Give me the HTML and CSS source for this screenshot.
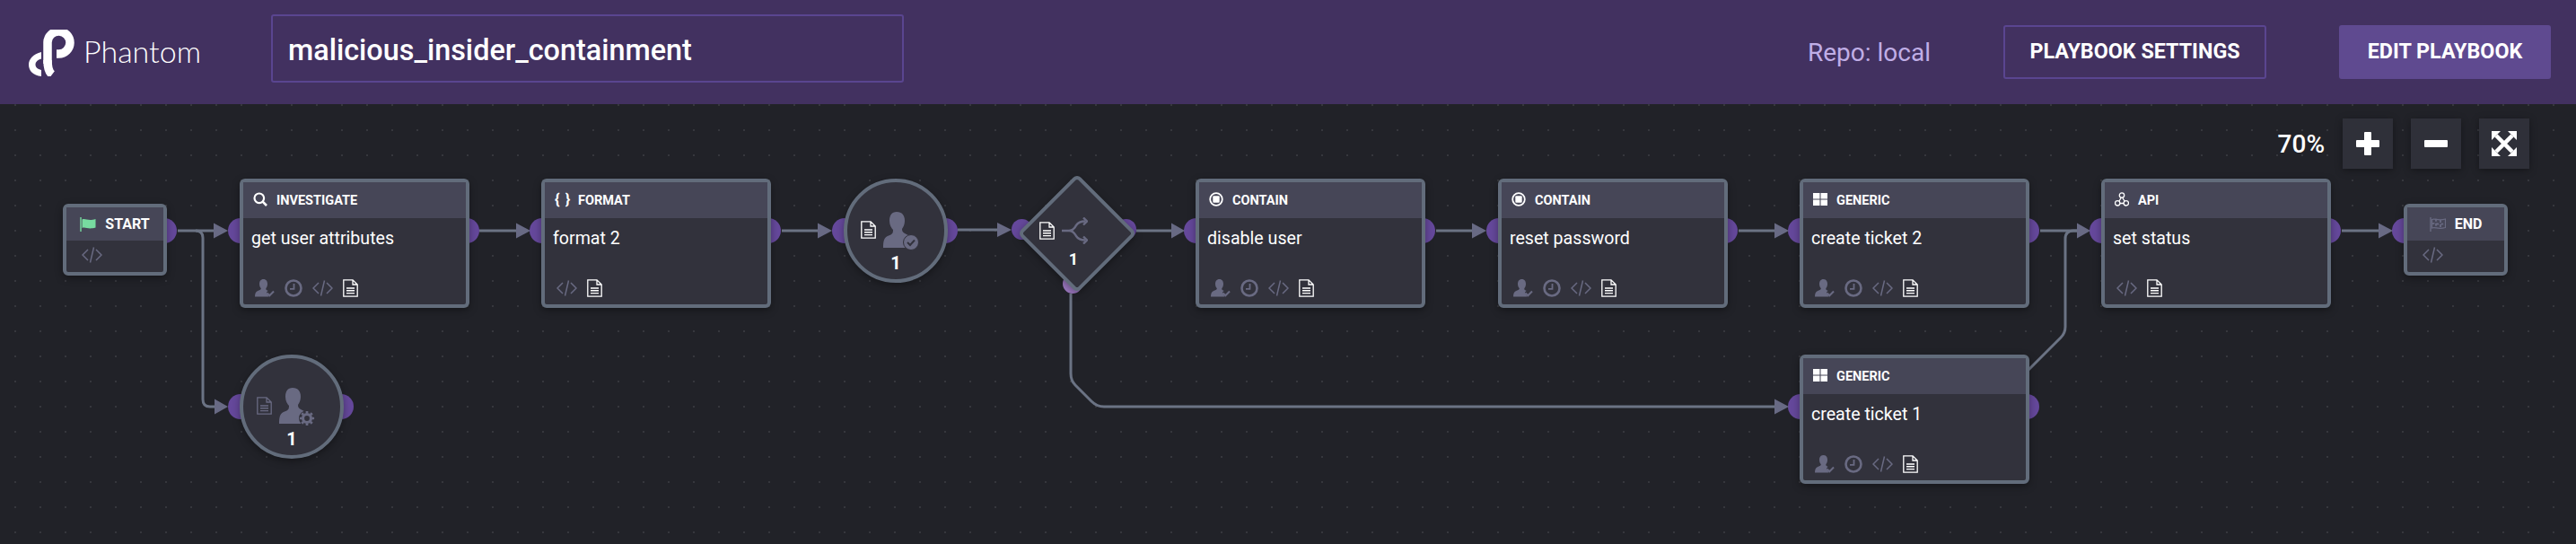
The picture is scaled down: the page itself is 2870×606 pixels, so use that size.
FILE: index.html
```html
<!DOCTYPE html>
<html lang="en">
<head>
    <meta charset="UTF-8">
    <title>Phantom - malicious_insider_containment</title>
    <link rel="stylesheet" href="styles.css">
</head>
<body>

    <!-- Icon sprites -->
    <svg class="sprites" width="0" height="0">
        <symbol id="i-doc" viewBox="0 0 17 20">
            <path d="M.8.8H11L16.2 6V19.2H.8Z M11 .8V6H16.2" fill="none" stroke="currentColor" stroke-width="1.3"/>
            <path d="M4 10H13M4 12.8H13M4 15.6H13" stroke="currentColor" stroke-width="1.4"/>
        </symbol>
        <symbol id="i-person" viewBox="0 0 22 20">
            <path d="M9.5 0C12.6 0 14 2.3 14 5.2C14 7.4 13.2 9 12.3 10.2C12.2 11.4 12.6 12 14 12.6L14.6 12.9L13 14.6L15.5 19.5H0C0 16 .7 14.2 3.2 13C6 11.9 6.8 11.5 6.8 10.2C5.8 9 5 7.4 5 5.2C5 2.3 6.5 0 9.5 0Z" fill="currentColor"/>
            <path d="M13.5 15.5L16.3 18.3L21 13.5" fill="none" stroke="currentColor" stroke-width="2"/>
        </symbol>
        <symbol id="i-clock" viewBox="0 0 20 20">
            <circle cx="10" cy="10" r="8.5" fill="none" stroke="currentColor" stroke-width="2.6"/>
            <path d="M10.5 5V10.8H6" fill="none" stroke="currentColor" stroke-width="1.8"/>
        </symbol>
        <symbol id="i-code" viewBox="0 0 23 18">
            <path d="M7 3L1 9L7 15M16 3L22 9L16 15M13.5 .5L9.5 17.5" fill="none" stroke="currentColor" stroke-width="1.5"/>
        </symbol>
        <symbol id="i-search" viewBox="0 0 16 16">
            <circle cx="6.8" cy="6.8" r="5.3" fill="none" stroke="currentColor" stroke-width="2.2"/>
            <path d="M10.7 10.7L15 15" stroke="currentColor" stroke-width="2.6"/>
        </symbol>
        <symbol id="i-contain" viewBox="0 0 16 16">
            <circle cx="8" cy="8" r="6.8" fill="none" stroke="currentColor" stroke-width="1.8"/>
            <rect x="4.3" y="4.3" width="7.4" height="7.4" rx="1" fill="currentColor"/>
        </symbol>
        <symbol id="i-generic" viewBox="0 0 15 13">
            <path d="M0 0H7V6H0ZM8 0H15V6H8ZM0 7H7V13H0ZM8 7H15V13H8Z" fill="currentColor"/>
        </symbol>
        <symbol id="i-api" viewBox="0 0 16 16">
            <path d="M8 5L3.5 12.5H12.5Z" fill="none" stroke="currentColor" stroke-width="1.3"/>
            <circle cx="8" cy="3.5" r="2.7" fill="#464657" stroke="currentColor" stroke-width="1.3"/>
            <circle cx="3.2" cy="12.3" r="2.7" fill="#464657" stroke="currentColor" stroke-width="1.3"/>
            <circle cx="12.8" cy="12.3" r="2.7" fill="#464657" stroke="currentColor" stroke-width="1.3"/>
        </symbol>
        <symbol id="i-flag" viewBox="0 0 18 16">
            <path d="M1 0V16" stroke="currentColor" stroke-width="1.4"/>
            <path d="M2.5 2.5C6 .8 9 4.6 17.5 2V11.5C9 14 6 10.3 2.5 12Z" fill="currentColor"/>
        </symbol>
        <symbol id="i-endflag" viewBox="0 0 18 16">
            <path d="M1 0V16" stroke="currentColor" stroke-width="1.4"/>
            <path d="M2.5 2.5C6 .8 9 4.6 17.5 2V11.5C9 14 6 10.3 2.5 12Z" fill="none" stroke="currentColor" stroke-width="1.2"/>
            <path d="M2.5 7.3C6 5.6 9 9.4 17.5 6.8M7 1.8V12M12 3V12.7" fill="none" stroke="currentColor" stroke-width="1.8" stroke-dasharray="3 2"/>
        </symbol>
        <symbol id="i-branch" viewBox="0 0 29 30">
            <path d="M0 15H8C13 15 14 12 16 9C18 6 20 4.5 26 4.5M8 15C13 15 14 18 16 21C18 24 20 25.5 26 25.5" fill="none" stroke="currentColor" stroke-width="2.4"/>
            <path d="M24 .5L28 4.5L24 8.5M24 21.5L28 25.5L24 29.5" fill="none" stroke="currentColor" stroke-width="2.4"/>
        </symbol>
        <symbol id="i-user" viewBox="0 0 38 40">
            <path d="M15 0C21 0 24 4 24 10C24 14 22.5 17 21 19C21 22 22 23 25 24.5L30 27V40H0C0 32 1 28.5 6 26.5C10 25 11 24 11 20C9 18 7 14.5 7 10C7 4 9.5 0 15 0Z" fill="currentColor"/>
        </symbol>
        <symbol id="i-fit" viewBox="0 0 28 28">
            <path d="M5 5L23 23M23 5L5 23" stroke="currentColor" stroke-width="4.5"/>
            <path d="M0 0H10L0 10ZM28 0H18L28 10ZM0 28H10L0 18ZM28 28H18L28 18Z" fill="currentColor"/>
        </symbol>
    </svg>

    <!-- Top bar -->
    <header class="topbar">
        <div class="brand">
            <svg class="brand-mark" viewBox="0 0 52 52" width="52" height="52">
                <path d="M21 38V14A12.5 12.5 0 1 1 33.5 27H31" fill="none" stroke="#fff" stroke-width="9.5"/>
                <path d="M21 34C21 42 22 47 26 50" fill="none" stroke="#fff" stroke-width="9.5"/>
                <path d="M14 25C5 27 0 33 0 39C0 46 5 51 14 52V45C10 44 7.5 42 7.5 39C7.5 36 10 33.5 14 32.5Z" fill="#fff"/>
            </svg>
            <span class="brand-name">Phantom</span>
        </div>
        <div class="title-box">malicious_insider_containment</div>
        <span class="repo">Repo: local</span>
        <button class="btn btn-outline">PLAYBOOK SETTINGS</button>
        <button class="btn btn-solid">EDIT PLAYBOOK</button>
    </header>

    <!-- Playbook canvas -->
    <main class="canvas">
        <div class="zoom-bar">
            <span class="zoom-level">70%</span>
            <button class="zoom-btn"><span class="plus"></span></button>
            <button class="zoom-btn"><span class="minus"></span></button>
            <button class="zoom-btn"><svg class="fit"><use href="#i-fit"/></svg></button>
        </div>

        <svg class="links" viewBox="0 0 2870 490">
            <g class="link-lines">
                <path d="M198 141H240"/>
                <path d="M218 141Q226 141 226 149V329Q226 337 234 337H240"/>
                <path d="M534 141H576"/>
                <path d="M871 141H912"/>
                <path d="M1067 140H1112"/>
                <path d="M1266 141H1306"/>
                <path d="M1600 141H1642"/>
                <path d="M1937 141H1979"/>
                <path d="M2273 141H2315"/>
                <path d="M2609 141H2652"/>
                <path d="M1193 211V300Q1193 308 1198 313L1216 331Q1222 337 1230 337H1978"/>
                <path d="M2255 301L2296 260Q2301 255 2301 248V150Q2301 141 2310 141H2315"/>
            </g>
            <g class="link-heads">
                <path d="M238 132.5L254 141L238 149.5Z"/>
                <path d="M239 328.5L254 337L239 345.5Z"/>
                <path d="M575 132.5L591 141L575 149.5Z"/>
                <path d="M911 132.5L927 141L911 149.5Z"/>
                <path d="M1111 132L1127 140L1111 148Z"/>
                <path d="M1305 132.5L1320 141L1305 149.5Z"/>
                <path d="M1640 132.5L1656 141L1640 149.5Z"/>
                <path d="M1977 132.5L1993 141L1977 149.5Z"/>
                <path d="M2314 132.5L2329 141L2314 149.5Z"/>
                <path d="M2650 132.5L2666 141L2650 149.5Z"/>
                <path d="M1977 328.5L1993 337L1977 345.5Z"/>
            </g>
        </svg>

        <!-- Start / end -->
        <div class="node small no-in n-start">
            <div class="node-head"><svg class="flag start-flag"><use href="#i-flag"/></svg>START</div>
            <div class="node-foot"><svg class="ico code"><use href="#i-code"/></svg></div>
        </div>
        <div class="node small no-out n-end">
            <div class="node-head"><svg class="flag end-flag"><use href="#i-endflag"/></svg>END</div>
            <div class="node-foot"><svg class="ico code"><use href="#i-code"/></svg></div>
        </div>

        <!-- Action blocks -->
        <div class="node n-investigate">
            <div class="node-head"><svg class="head-ico"><use href="#i-search"/></svg>INVESTIGATE</div>
            <div class="node-name">get user attributes</div>
            <div class="node-foot">
                <svg class="ico person"><use href="#i-person"/></svg>
                <svg class="ico clock"><use href="#i-clock"/></svg>
                <svg class="ico code"><use href="#i-code"/></svg>
                <svg class="ico doc"><use href="#i-doc"/></svg>
            </div>
        </div>

        <div class="node n-format">
            <div class="node-head"><span class="braces">{ }</span>FORMAT</div>
            <div class="node-name">format 2</div>
            <div class="node-foot">
                <svg class="ico code"><use href="#i-code"/></svg>
                <svg class="ico doc"><use href="#i-doc"/></svg>
            </div>
        </div>

        <div class="node n-contain1">
            <div class="node-head"><svg class="head-ico"><use href="#i-contain"/></svg>CONTAIN</div>
            <div class="node-name">disable user</div>
            <div class="node-foot">
                <svg class="ico person"><use href="#i-person"/></svg>
                <svg class="ico clock"><use href="#i-clock"/></svg>
                <svg class="ico code"><use href="#i-code"/></svg>
                <svg class="ico doc"><use href="#i-doc"/></svg>
            </div>
        </div>

        <div class="node n-contain2">
            <div class="node-head"><svg class="head-ico"><use href="#i-contain"/></svg>CONTAIN</div>
            <div class="node-name">reset password</div>
            <div class="node-foot">
                <svg class="ico person"><use href="#i-person"/></svg>
                <svg class="ico clock"><use href="#i-clock"/></svg>
                <svg class="ico code"><use href="#i-code"/></svg>
                <svg class="ico doc"><use href="#i-doc"/></svg>
            </div>
        </div>

        <div class="node n-generic2">
            <div class="node-head"><svg class="head-ico"><use href="#i-generic"/></svg>GENERIC</div>
            <div class="node-name">create ticket 2</div>
            <div class="node-foot">
                <svg class="ico person"><use href="#i-person"/></svg>
                <svg class="ico clock"><use href="#i-clock"/></svg>
                <svg class="ico code"><use href="#i-code"/></svg>
                <svg class="ico doc"><use href="#i-doc"/></svg>
            </div>
        </div>

        <div class="node n-generic1">
            <div class="node-head"><svg class="head-ico"><use href="#i-generic"/></svg>GENERIC</div>
            <div class="node-name">create ticket 1</div>
            <div class="node-foot">
                <svg class="ico person"><use href="#i-person"/></svg>
                <svg class="ico clock"><use href="#i-clock"/></svg>
                <svg class="ico code"><use href="#i-code"/></svg>
                <svg class="ico doc"><use href="#i-doc"/></svg>
            </div>
        </div>

        <div class="node n-api">
            <div class="node-head"><svg class="head-ico"><use href="#i-api"/></svg>API</div>
            <div class="node-name">set status</div>
            <div class="node-foot">
                <svg class="ico code"><use href="#i-code"/></svg>
                <svg class="ico doc"><use href="#i-doc"/></svg>
            </div>
        </div>

        <!-- Prompts -->
        <div class="round n-prompt1">
            <div class="round-icons">
                <svg class="ico doc"><use href="#i-doc"/></svg>
                <span class="user">
                    <svg class="user-body"><use href="#i-user"/></svg>
                    <svg class="badge" viewBox="0 0 18 18">
                        <circle cx="9" cy="9" r="8.5" fill="#696a82" stroke="#32323c" stroke-width="1"/>
                        <path d="M5 9L8 12L13 6.5" fill="none" stroke="#32323c" stroke-width="2"/>
                    </svg>
                </span>
            </div>
            <span class="count">1</span>
        </div>

        <div class="round n-prompt2">
            <div class="round-icons">
                <svg class="ico doc dim"><use href="#i-doc"/></svg>
                <span class="user">
                    <svg class="user-body"><use href="#i-user"/></svg>
                    <svg class="badge" viewBox="-1 -1 20 20">
                        <circle cx="9" cy="9" r="10" fill="#32323c"/>
                        <circle cx="9" cy="9" r="5" fill="none" stroke="#696a82" stroke-width="3.6"/>
                        <path d="M9 0V3M9 15V18M0 9H3M15 9H18M2.6 2.6L4.8 4.8M13.2 13.2L15.4 15.4M2.6 15.4L4.8 13.2M13.2 4.8L15.4 2.6" stroke="#696a82" stroke-width="3"/>
                    </svg>
                </span>
            </div>
            <span class="count">1</span>
        </div>

        <!-- Decision -->
        <div class="decision n-decision">
            <span class="port-left"></span>
            <span class="port-right"></span>
            <div class="round-icons">
                <svg class="ico doc"><use href="#i-doc"/></svg>
                <svg class="branch"><use href="#i-branch"/></svg>
            </div>
            <span class="count">1</span>
        </div>
    </main>

</body>
</html>
```

FILE: styles.css
```css
/* General Styles */
* {
    box-sizing: border-box;
}

body {
    margin: 0;
    width: 2870px;
    height: 606px;
    overflow: hidden;
    background: #212228;
    color: #fff;
    font-family: Roboto, "Liberation Sans", sans-serif;
}

.sprites {
    position: absolute;
}

/* Top Bar */
.topbar {
    display: flex;
    align-items: center;
    height: 116px;
    padding: 0 28px 0 32px;
    background: #423160;
}

.brand {
    display: flex;
    align-items: center;
    gap: 9px;
    width: 270px;
}

.brand-mark {
    flex: none;
    margin-top: 2px;
}

.brand-name {
    font-family: Lato, sans-serif;
    font-weight: 300;
    font-size: 34px;
    margin-top: -4px;
}

.title-box {
    display: flex;
    align-items: center;
    width: 705px;
    height: 76px;
    margin-top: -8px;
    padding: 3px 0 0 17px;
    border: 2px solid #5a4590;
    border-radius: 3px;
    font-size: 32.4px;
    font-weight: 500;
}

.repo {
    margin-left: auto;
    margin-right: 81px;
    font-size: 28px;
    color: #c0aee6;
}

.btn {
    height: 60px;
    border-radius: 3px;
    color: #fff;
    font-family: inherit;
    font-size: 23.3px;
    font-weight: 700;
    padding: 0 0 2px;
}

.btn-outline {
    width: 293px;
    margin-right: 81px;
    background: transparent;
    border: 2px solid #5a4590;
}

.btn-solid {
    width: 236px;
    background: #5f4a90;
    border: none;
}

/* Canvas */
.canvas {
    position: relative;
    z-index: 0;
    height: 490px;
    background-image: radial-gradient(circle, #36373d 1px, transparent 1.5px);
    background-size: 28px 28px;
    background-position: 3px -13px;
}

.links {
    position: absolute;
    left: 0;
    top: 0;
    width: 2870px;
    height: 490px;
}

.link-lines path {
    fill: none;
    stroke: #6b7384;
    stroke-width: 3;
}

.link-heads path {
    fill: #686a84;
}

/* Zoom Controls */
.zoom-bar {
    position: absolute;
    top: 16px;
    right: 52px;
    display: flex;
    align-items: center;
    gap: 20px;
    z-index: 2;
}

.zoom-level {
    font-size: 28px;
    font-weight: 500;
}

.zoom-btn {
    display: flex;
    align-items: center;
    justify-content: center;
    width: 56px;
    height: 56px;
    padding: 0;
    border: none;
    background: #2f3039;
    color: #fff;
    box-shadow: 0 2px 8px rgba(0, 0, 0, 0.35);
}

.plus,
.minus {
    position: relative;
    display: block;
    width: 26px;
    height: 8px;
    border-radius: 1px;
    background: #fff;
}

.plus::after {
    content: "";
    position: absolute;
    left: 9px;
    top: -9px;
    width: 8px;
    height: 26px;
    border-radius: 1px;
    background: #fff;
}

.fit {
    width: 28px;
    height: 28px;
}

/* Nodes */
.node {
    position: absolute;
    display: flex;
    flex-direction: column;
    width: 256px;
    height: 144px;
    background: #32323c;
    border: 4px solid #626c7b;
    border-radius: 6px;
    box-shadow: 0 3px 8px rgba(0, 0, 0, 0.35);
}

.node::before,
.node::after,
.round::before,
.round::after {
    content: "";
    position: absolute;
    top: 50%;
    width: 28px;
    height: 28px;
    margin-top: -14px;
    border-radius: 50%;
    background: #65489b;
    z-index: -1;
}

.node::before,
.node::after {
    top: 54px;
    margin-top: -14px;
}

.node::before,
.round::before {
    left: -17px;
}

.node::after,
.round::after {
    right: -15px;
}

.no-in::before,
.no-out::after {
    display: none;
}

.node-head {
    display: flex;
    align-items: center;
    flex: none;
    height: 40px;
    padding-left: 11px;
    background: #464657;
    font-size: 14.5px;
    font-weight: 700;
}

.head-ico {
    flex: none;
    width: 16px;
    height: 16px;
    margin-right: 10px;
    margin-top: -2px;
}

.braces {
    width: 26px;
    font-size: 17px;
    letter-spacing: 1px;
    margin-top: -2px;
}

.node-name {
    padding: 11px 9px 0;
    font-size: 19.6px;
}

.node-foot {
    display: flex;
    align-items: center;
    gap: 11px;
    margin-top: auto;
    padding: 0 0 8px 13px;
}

.ico {
    flex: none;
    color: #696a82;
}

.person {
    width: 22px;
    height: 20px;
}

.clock {
    width: 20px;
    height: 20px;
}

.code {
    width: 23px;
    height: 18px;
}

.doc {
    width: 17px;
    height: 20px;
    color: #fff;
}

.doc.dim {
    color: #696a82;
}

/* Small start / end nodes */
.small {
    width: 116px;
    height: 80px;
}

.small::before,
.small::after {
    top: 26px;
}

.small .node-head {
    justify-content: center;
    height: 37px;
    padding-left: 0;
    gap: 10px;
    font-size: 16px;
}

.small .node-foot {
    padding: 0 0 10px 17px;
}

.flag {
    width: 18px;
    height: 16px;
}

.start-flag {
    color: #77dba0;
}

.end-flag {
    color: #696a82;
}

/* Round prompt nodes */
.round {
    position: absolute;
    display: flex;
    flex-direction: column;
    align-items: center;
    width: 116px;
    height: 116px;
    padding-top: 33px;
    background: #32323c;
    border: 4px solid #626c7b;
    border-radius: 50%;
    box-shadow: 0 3px 8px rgba(0, 0, 0, 0.35);
}

.round-icons {
    display: flex;
    align-items: center;
    gap: 8px;
}

.round .round-icons {
    padding-right: 16px;
}

.user {
    position: relative;
    display: block;
    width: 38px;
    height: 40px;
}

.user-body {
    width: 38px;
    height: 40px;
    color: #696a82;
}

.badge {
    position: absolute;
    right: -2px;
    bottom: -3px;
    width: 18px;
    height: 18px;
}

.count {
    font-size: 20px;
    font-weight: 700;
    line-height: 20px;
    margin-top: 7px;
}

/* Decision diamond */
.decision {
    position: absolute;
    display: flex;
    flex-direction: column;
    align-items: center;
    width: 118px;
    height: 118px;
    padding-top: 45px;
}

.decision::before {
    content: "";
    position: absolute;
    left: 16px;
    top: 16px;
    width: 86px;
    height: 86px;
    background: #32323c;
    border: 4px solid #626c7b;
    border-radius: 6px;
    box-shadow: 2px 2px 8px rgba(0, 0, 0, 0.35);
    transform: rotate(45deg);
}

.decision::after {
    content: "";
    position: absolute;
    left: 47px;
    bottom: -12px;
    width: 22px;
    height: 22px;
    border-radius: 50%;
    background: #9c78c0;
    z-index: -1;
}

.decision .round-icons,
.decision .count {
    position: relative;
}

.decision .round-icons {
    padding-right: 22px;
}

.decision .count {
    font-size: 18px;
    margin-top: 7px;
}

.branch {
    width: 29px;
    height: 30px;
    color: #696a82;
}

.port-left,
.port-right {
    position: absolute;
    top: 47px;
    width: 23px;
    height: 23px;
    border-radius: 50%;
    background: #65489b;
    z-index: -1;
}

.port-left {
    left: -10px;
}

.port-right {
    left: 106px;
}

/* Node placement on the canvas */
.n-start { left: 70px; top: 111px; }
.n-end { left: 2678px; top: 111px; }
.n-investigate { left: 267px; top: 83px; }
.n-format { left: 603px; top: 83px; }
.n-contain1 { left: 1332px; top: 83px; }
.n-contain2 { left: 1669px; top: 83px; }
.n-generic2 { left: 2005px; top: 83px; }
.n-generic1 { left: 2005px; top: 279px; }
.n-api { left: 2341px; top: 83px; }
.n-prompt1 { left: 940px; top: 83px; }
.n-prompt2 { left: 267px; top: 279px; }
.n-decision { left: 1137px; top: 81px; }
```
